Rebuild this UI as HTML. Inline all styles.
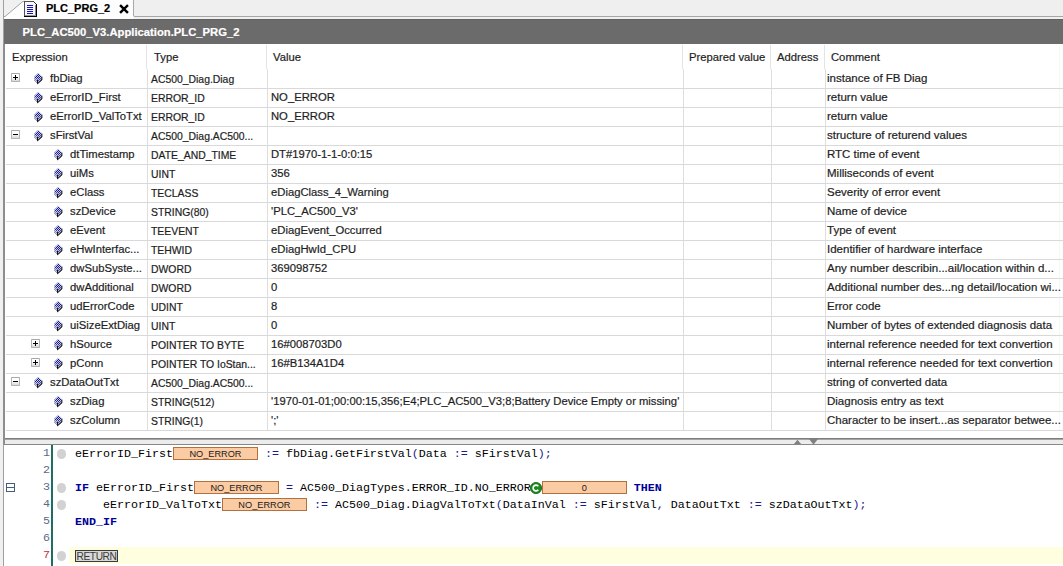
<!DOCTYPE html>
<html><head><meta charset="utf-8"><style>
*{margin:0;padding:0;box-sizing:border-box}
html,body{width:1063px;height:566px;overflow:hidden;background:#f0f0f0;position:relative}
body{font-family:"Liberation Sans",sans-serif;font-size:11.25px;color:#1e1e1e}
.abs{position:absolute}
.t{position:absolute;white-space:pre;line-height:19px;-webkit-text-stroke:0.2px currentColor}
.exp{position:absolute;width:9px;height:8.5px;border:1px solid #b4b4b4;border-top-color:#a8a8a8;border-radius:1px;background:linear-gradient(#ffffff 40%,#d8d8d8)}
.exp .eh{position:absolute;left:1.2px;top:2.6px;width:4.8px;height:1.4px;background:#000}
.exp .ev{position:absolute;left:2.9px;top:0.8px;width:1.4px;height:5px;background:#000}
.dia{position:absolute}
.code{position:absolute;font-family:"Liberation Mono",monospace;font-size:11.67px;white-space:pre;line-height:17px;color:#000}
.kw{color:#00009a;font-weight:bold}
.op{color:#1a1a8c}
.box{display:inline-block;vertical-align:top;position:relative;top:1px;width:85px;height:13px;background:#fbcba3;border:1px solid #b07040;font-family:"Liberation Sans",sans-serif;font-size:9.2px;line-height:12px;text-align:center;color:#1a1a1a}
.ln{position:absolute;font-family:"Liberation Mono",monospace;font-size:11.67px;line-height:17px;color:#5a6a88;text-align:right;width:20px}
.bp{position:absolute;width:9.5px;height:9.5px;border-radius:50%;background:#d2d2d2}
</style></head><body>

<svg width="0" height="0" style="position:absolute"><defs><pattern id="chk" width="2" height="2" patternUnits="userSpaceOnUse"><rect width="2" height="2" fill="#1a1a80"/><rect width="1" height="1" fill="#c4c8fa"/><rect x="1" y="1" width="1" height="1" fill="#c4c8fa"/></pattern><pattern id="chk2" width="2" height="2" patternUnits="userSpaceOnUse"><rect width="2" height="2" fill="#8080b0"/><rect width="1" height="1" fill="#c8cae4"/><rect x="1" y="1" width="1" height="1" fill="#c8cae4"/></pattern><pattern id="chk3" width="2" height="2" patternUnits="userSpaceOnUse"><rect width="2" height="2" fill="#50508a"/><rect width="1" height="1" fill="#b0b4d8"/><rect x="1" y="1" width="1" height="1" fill="#b0b4d8"/></pattern></defs></svg>
<div class="abs" style="left:0;top:0;width:1063px;height:19px;background:#f0f0f0"></div>
<div class="abs" style="left:133px;top:-2px;width:931px;height:19px;background:#efefef;border-left:1px solid #a6a6a6;border-bottom:1px solid #a6a6a6;border-bottom-left-radius:2px"></div>
<svg class="abs" style="left:0;top:0" width="140" height="19" viewBox="0 0 140 19"><path d="M4 16.5 L22.5 1 L22.5 0 L133.5 0 L133.5 19 L4 19 Z" fill="#fdfdfd"/><path d="M3.5 16.5 L5 16.5 L23 1.3 L25 1.3" fill="none" stroke="#a0a0a0" stroke-width="1"/><path d="M133.5 0 L133.5 16" fill="none" stroke="#a8a8a8" stroke-width="1"/></svg>
<svg class="abs" style="left:24px;top:0px" width="14" height="18" viewBox="0 0 14 18" shape-rendering="crispEdges"><path d="M0 1 L10 1 L13 4 L13 17 L0 17 Z" fill="#f6f6fc"/><rect x="0" y="1" width="1" height="16" fill="#505050"/><rect x="0" y="1" width="10" height="1" fill="#505050"/><path d="M9.5 1.5 L12.5 4.5" stroke="#303030" stroke-width="1" shape-rendering="auto"/><rect x="12" y="4" width="1" height="13" fill="#000"/><rect x="11" y="5" width="1" height="11" fill="#888"/><rect x="0" y="16" width="13" height="1" fill="#000"/><rect x="1" y="15" width="11" height="1" fill="#999"/><rect x="3" y="5" width="6" height="1" fill="#1414b4"/><rect x="3" y="7" width="6" height="1" fill="#1414b4"/><rect x="3" y="9" width="6" height="1" fill="#1414b4"/><rect x="3" y="11" width="6" height="1" fill="#1414b4"/><rect x="3" y="13" width="6" height="1" fill="#1414b4"/></svg>
<div class="t" style="left:46px;top:0px;font-weight:bold;font-size:11px;line-height:17px;color:#000">PLC_PRG_2</div>
<svg class="abs" style="left:119px;top:4px" width="10" height="10" viewBox="0 0 10 10"><path d="M1.9 1.9 L8.1 8.1 M8.1 1.9 L1.9 8.1" stroke="#000" stroke-width="2.4" stroke-linecap="square"/></svg>
<div class="abs" style="left:3px;top:0;width:1px;height:566px;background:#a0a0a0"></div>
<div class="abs" style="left:4px;top:19px;width:1059px;height:25px;background:#6b6b6b;border-top:1px solid #616161"></div>
<div class="t" style="left:22.5px;top:23px;font-weight:bold;color:#fff;font-size:11.25px">PLC_AC500_V3.Application.PLC_PRG_2</div>
<div class="abs" style="left:4px;top:44px;width:1059px;height:394px;background:#fff"></div>
<div class="abs" style="left:3px;top:44px;width:2px;height:401px;background:#8e8e8e"></div>
<div class="abs" style="left:146px;top:45px;width:1px;height:24px;background:#e4e4e4"></div>
<div class="abs" style="left:147px;top:69px;width:1px;height:362px;background:#dedede"></div>
<div class="abs" style="left:266px;top:45px;width:1px;height:24px;background:#e4e4e4"></div>
<div class="abs" style="left:267px;top:69px;width:1px;height:362px;background:#dedede"></div>
<div class="abs" style="left:682px;top:45px;width:1px;height:24px;background:#e4e4e4"></div>
<div class="abs" style="left:683px;top:69px;width:1px;height:362px;background:#dedede"></div>
<div class="abs" style="left:770px;top:45px;width:1px;height:24px;background:#e4e4e4"></div>
<div class="abs" style="left:771px;top:69px;width:1px;height:362px;background:#dedede"></div>
<div class="abs" style="left:824px;top:45px;width:1px;height:24px;background:#e4e4e4"></div>
<div class="abs" style="left:825px;top:69px;width:1px;height:362px;background:#dedede"></div>
<div class="abs" style="left:1059px;top:46px;width:1px;height:385px;background:#f7f7f7"></div>
<div class="t" style="left:12px;top:48px">Expression</div>
<div class="t" style="left:154px;top:48px">Type</div>
<div class="t" style="left:273px;top:48px">Value</div>
<div class="t" style="left:689px;top:48px">Prepared value</div>
<div class="t" style="left:777px;top:48px">Address</div>
<div class="t" style="left:831px;top:48px">Comment</div>
<div class="abs" style="left:6px;top:88px;width:1057px;height:1px;background:#d9d9d9"></div>
<div style="position:absolute;left:11px;top:73px"><span class="exp"><span class="eh"></span><span class="ev"></span></span></div>
<div style="position:absolute;left:33px;top:72px"><svg class="dia" width="11" height="13" viewBox="0 0 11 13"><path d="M5.3 1 L8.9 4.4 L4.5 7.8 L1.1 4.9 Z" fill="url(#chk)"/><path d="M1.1 4.9 L4.5 7.8 L4.5 11.8 L1.1 8.5 Z" fill="url(#chk2)"/><path d="M4.5 7.8 L8.9 4.4 L8.9 8 L4.5 11.8 Z" fill="url(#chk3)"/><path d="M4.5 8 L4.5 11.8 L8.9 8 L8.9 4.6" fill="none" stroke="#000" stroke-width="0.9"/></svg></div>
<div class="t" style="left:50px;top:69px">fbDiag</div>
<div class="t" style="left:151px;top:70px;font-size:10.4px">AC500_Diag.Diag</div>
<div class="t" style="left:827px;top:69px;font-size:11.5px">instance of FB Diag</div>
<div class="abs" style="left:6px;top:107px;width:1057px;height:1px;background:#d9d9d9"></div>
<div style="position:absolute;left:33px;top:91px"><svg class="dia" width="11" height="13" viewBox="0 0 11 13"><path d="M5.3 1 L8.9 4.4 L4.5 7.8 L1.1 4.9 Z" fill="url(#chk)"/><path d="M1.1 4.9 L4.5 7.8 L4.5 11.8 L1.1 8.5 Z" fill="url(#chk2)"/><path d="M4.5 7.8 L8.9 4.4 L8.9 8 L4.5 11.8 Z" fill="url(#chk3)"/><path d="M4.5 8 L4.5 11.8 L8.9 8 L8.9 4.6" fill="none" stroke="#000" stroke-width="0.9"/></svg></div>
<div class="t" style="left:50px;top:88px">eErrorID_First</div>
<div class="t" style="left:151px;top:89px;font-size:10.4px">ERROR_ID</div>
<div class="t" style="left:271px;top:88px">NO_ERROR</div>
<div class="t" style="left:827px;top:88px;font-size:11.5px">return value</div>
<div class="abs" style="left:6px;top:126px;width:1057px;height:1px;background:#d9d9d9"></div>
<div style="position:absolute;left:33px;top:110px"><svg class="dia" width="11" height="13" viewBox="0 0 11 13"><path d="M5.3 1 L8.9 4.4 L4.5 7.8 L1.1 4.9 Z" fill="url(#chk)"/><path d="M1.1 4.9 L4.5 7.8 L4.5 11.8 L1.1 8.5 Z" fill="url(#chk2)"/><path d="M4.5 7.8 L8.9 4.4 L8.9 8 L4.5 11.8 Z" fill="url(#chk3)"/><path d="M4.5 8 L4.5 11.8 L8.9 8 L8.9 4.6" fill="none" stroke="#000" stroke-width="0.9"/></svg></div>
<div class="t" style="left:50px;top:107px">eErrorID_ValToTxt</div>
<div class="t" style="left:151px;top:108px;font-size:10.4px">ERROR_ID</div>
<div class="t" style="left:271px;top:107px">NO_ERROR</div>
<div class="t" style="left:827px;top:107px;font-size:11.5px">return value</div>
<div class="abs" style="left:6px;top:145px;width:1057px;height:1px;background:#d9d9d9"></div>
<div style="position:absolute;left:11px;top:130px"><span class="exp"><span class="eh"></span></span></div>
<div style="position:absolute;left:33px;top:129px"><svg class="dia" width="11" height="13" viewBox="0 0 11 13"><path d="M5.3 1 L8.9 4.4 L4.5 7.8 L1.1 4.9 Z" fill="url(#chk)"/><path d="M1.1 4.9 L4.5 7.8 L4.5 11.8 L1.1 8.5 Z" fill="url(#chk2)"/><path d="M4.5 7.8 L8.9 4.4 L8.9 8 L4.5 11.8 Z" fill="url(#chk3)"/><path d="M4.5 8 L4.5 11.8 L8.9 8 L8.9 4.6" fill="none" stroke="#000" stroke-width="0.9"/></svg></div>
<div class="t" style="left:50px;top:126px">sFirstVal</div>
<div class="t" style="left:151px;top:127px;font-size:10.4px">AC500_Diag.AC500...</div>
<div class="t" style="left:827px;top:126px;font-size:11.5px">structure of returend values</div>
<div class="abs" style="left:6px;top:164px;width:1057px;height:1px;background:#d9d9d9"></div>
<div style="position:absolute;left:53px;top:148px"><svg class="dia" width="11" height="13" viewBox="0 0 11 13"><path d="M5.3 1 L8.9 4.4 L4.5 7.8 L1.1 4.9 Z" fill="url(#chk)"/><path d="M1.1 4.9 L4.5 7.8 L4.5 11.8 L1.1 8.5 Z" fill="url(#chk2)"/><path d="M4.5 7.8 L8.9 4.4 L8.9 8 L4.5 11.8 Z" fill="url(#chk3)"/><path d="M4.5 8 L4.5 11.8 L8.9 8 L8.9 4.6" fill="none" stroke="#000" stroke-width="0.9"/></svg></div>
<div class="t" style="left:70px;top:145px">dtTimestamp</div>
<div class="t" style="left:151px;top:146px;font-size:10.4px">DATE_AND_TIME</div>
<div class="t" style="left:271px;top:145px">DT#1970-1-1-0:0:15</div>
<div class="t" style="left:827px;top:145px;font-size:11.5px">RTC time of event</div>
<div class="abs" style="left:6px;top:183px;width:1057px;height:1px;background:#d9d9d9"></div>
<div style="position:absolute;left:53px;top:167px"><svg class="dia" width="11" height="13" viewBox="0 0 11 13"><path d="M5.3 1 L8.9 4.4 L4.5 7.8 L1.1 4.9 Z" fill="url(#chk)"/><path d="M1.1 4.9 L4.5 7.8 L4.5 11.8 L1.1 8.5 Z" fill="url(#chk2)"/><path d="M4.5 7.8 L8.9 4.4 L8.9 8 L4.5 11.8 Z" fill="url(#chk3)"/><path d="M4.5 8 L4.5 11.8 L8.9 8 L8.9 4.6" fill="none" stroke="#000" stroke-width="0.9"/></svg></div>
<div class="t" style="left:70px;top:164px">uiMs</div>
<div class="t" style="left:151px;top:165px;font-size:10.4px">UINT</div>
<div class="t" style="left:271px;top:164px">356</div>
<div class="t" style="left:827px;top:164px;font-size:11.5px">Milliseconds of event</div>
<div class="abs" style="left:6px;top:202px;width:1057px;height:1px;background:#d9d9d9"></div>
<div style="position:absolute;left:53px;top:186px"><svg class="dia" width="11" height="13" viewBox="0 0 11 13"><path d="M5.3 1 L8.9 4.4 L4.5 7.8 L1.1 4.9 Z" fill="url(#chk)"/><path d="M1.1 4.9 L4.5 7.8 L4.5 11.8 L1.1 8.5 Z" fill="url(#chk2)"/><path d="M4.5 7.8 L8.9 4.4 L8.9 8 L4.5 11.8 Z" fill="url(#chk3)"/><path d="M4.5 8 L4.5 11.8 L8.9 8 L8.9 4.6" fill="none" stroke="#000" stroke-width="0.9"/></svg></div>
<div class="t" style="left:70px;top:183px">eClass</div>
<div class="t" style="left:151px;top:184px;font-size:10.4px">TECLASS</div>
<div class="t" style="left:271px;top:183px">eDiagClass_4_Warning</div>
<div class="t" style="left:827px;top:183px;font-size:11.5px">Severity of error event</div>
<div class="abs" style="left:6px;top:221px;width:1057px;height:1px;background:#d9d9d9"></div>
<div style="position:absolute;left:53px;top:205px"><svg class="dia" width="11" height="13" viewBox="0 0 11 13"><path d="M5.3 1 L8.9 4.4 L4.5 7.8 L1.1 4.9 Z" fill="url(#chk)"/><path d="M1.1 4.9 L4.5 7.8 L4.5 11.8 L1.1 8.5 Z" fill="url(#chk2)"/><path d="M4.5 7.8 L8.9 4.4 L8.9 8 L4.5 11.8 Z" fill="url(#chk3)"/><path d="M4.5 8 L4.5 11.8 L8.9 8 L8.9 4.6" fill="none" stroke="#000" stroke-width="0.9"/></svg></div>
<div class="t" style="left:70px;top:202px">szDevice</div>
<div class="t" style="left:151px;top:203px;font-size:10.4px">STRING(80)</div>
<div class="t" style="left:271px;top:202px">&#x27;PLC_AC500_V3&#x27;</div>
<div class="t" style="left:827px;top:202px;font-size:11.5px">Name of device</div>
<div class="abs" style="left:6px;top:240px;width:1057px;height:1px;background:#d9d9d9"></div>
<div style="position:absolute;left:53px;top:224px"><svg class="dia" width="11" height="13" viewBox="0 0 11 13"><path d="M5.3 1 L8.9 4.4 L4.5 7.8 L1.1 4.9 Z" fill="url(#chk)"/><path d="M1.1 4.9 L4.5 7.8 L4.5 11.8 L1.1 8.5 Z" fill="url(#chk2)"/><path d="M4.5 7.8 L8.9 4.4 L8.9 8 L4.5 11.8 Z" fill="url(#chk3)"/><path d="M4.5 8 L4.5 11.8 L8.9 8 L8.9 4.6" fill="none" stroke="#000" stroke-width="0.9"/></svg></div>
<div class="t" style="left:70px;top:221px">eEvent</div>
<div class="t" style="left:151px;top:222px;font-size:10.4px">TEEVENT</div>
<div class="t" style="left:271px;top:221px">eDiagEvent_Occurred</div>
<div class="t" style="left:827px;top:221px;font-size:11.5px">Type of event</div>
<div class="abs" style="left:6px;top:259px;width:1057px;height:1px;background:#d9d9d9"></div>
<div style="position:absolute;left:53px;top:243px"><svg class="dia" width="11" height="13" viewBox="0 0 11 13"><path d="M5.3 1 L8.9 4.4 L4.5 7.8 L1.1 4.9 Z" fill="url(#chk)"/><path d="M1.1 4.9 L4.5 7.8 L4.5 11.8 L1.1 8.5 Z" fill="url(#chk2)"/><path d="M4.5 7.8 L8.9 4.4 L8.9 8 L4.5 11.8 Z" fill="url(#chk3)"/><path d="M4.5 8 L4.5 11.8 L8.9 8 L8.9 4.6" fill="none" stroke="#000" stroke-width="0.9"/></svg></div>
<div class="t" style="left:70px;top:240px">eHwInterfac...</div>
<div class="t" style="left:151px;top:241px;font-size:10.4px">TEHWID</div>
<div class="t" style="left:271px;top:240px">eDiagHwId_CPU</div>
<div class="t" style="left:827px;top:240px;font-size:11.5px">Identifier of hardware interface</div>
<div class="abs" style="left:6px;top:278px;width:1057px;height:1px;background:#d9d9d9"></div>
<div style="position:absolute;left:53px;top:262px"><svg class="dia" width="11" height="13" viewBox="0 0 11 13"><path d="M5.3 1 L8.9 4.4 L4.5 7.8 L1.1 4.9 Z" fill="url(#chk)"/><path d="M1.1 4.9 L4.5 7.8 L4.5 11.8 L1.1 8.5 Z" fill="url(#chk2)"/><path d="M4.5 7.8 L8.9 4.4 L8.9 8 L4.5 11.8 Z" fill="url(#chk3)"/><path d="M4.5 8 L4.5 11.8 L8.9 8 L8.9 4.6" fill="none" stroke="#000" stroke-width="0.9"/></svg></div>
<div class="t" style="left:70px;top:259px">dwSubSyste...</div>
<div class="t" style="left:151px;top:260px;font-size:10.4px">DWORD</div>
<div class="t" style="left:271px;top:259px">369098752</div>
<div class="t" style="left:827px;top:259px;font-size:11.5px">Any number describin...ail/location within d...</div>
<div class="abs" style="left:6px;top:297px;width:1057px;height:1px;background:#d9d9d9"></div>
<div style="position:absolute;left:53px;top:281px"><svg class="dia" width="11" height="13" viewBox="0 0 11 13"><path d="M5.3 1 L8.9 4.4 L4.5 7.8 L1.1 4.9 Z" fill="url(#chk)"/><path d="M1.1 4.9 L4.5 7.8 L4.5 11.8 L1.1 8.5 Z" fill="url(#chk2)"/><path d="M4.5 7.8 L8.9 4.4 L8.9 8 L4.5 11.8 Z" fill="url(#chk3)"/><path d="M4.5 8 L4.5 11.8 L8.9 8 L8.9 4.6" fill="none" stroke="#000" stroke-width="0.9"/></svg></div>
<div class="t" style="left:70px;top:278px">dwAdditional</div>
<div class="t" style="left:151px;top:279px;font-size:10.4px">DWORD</div>
<div class="t" style="left:271px;top:278px">0</div>
<div class="t" style="left:827px;top:278px;font-size:11.5px">Additional number des...ng detail/location wi...</div>
<div class="abs" style="left:6px;top:316px;width:1057px;height:1px;background:#d9d9d9"></div>
<div style="position:absolute;left:53px;top:300px"><svg class="dia" width="11" height="13" viewBox="0 0 11 13"><path d="M5.3 1 L8.9 4.4 L4.5 7.8 L1.1 4.9 Z" fill="url(#chk)"/><path d="M1.1 4.9 L4.5 7.8 L4.5 11.8 L1.1 8.5 Z" fill="url(#chk2)"/><path d="M4.5 7.8 L8.9 4.4 L8.9 8 L4.5 11.8 Z" fill="url(#chk3)"/><path d="M4.5 8 L4.5 11.8 L8.9 8 L8.9 4.6" fill="none" stroke="#000" stroke-width="0.9"/></svg></div>
<div class="t" style="left:70px;top:297px">udErrorCode</div>
<div class="t" style="left:151px;top:298px;font-size:10.4px">UDINT</div>
<div class="t" style="left:271px;top:297px">8</div>
<div class="t" style="left:827px;top:297px;font-size:11.5px">Error code</div>
<div class="abs" style="left:6px;top:335px;width:1057px;height:1px;background:#d9d9d9"></div>
<div style="position:absolute;left:53px;top:319px"><svg class="dia" width="11" height="13" viewBox="0 0 11 13"><path d="M5.3 1 L8.9 4.4 L4.5 7.8 L1.1 4.9 Z" fill="url(#chk)"/><path d="M1.1 4.9 L4.5 7.8 L4.5 11.8 L1.1 8.5 Z" fill="url(#chk2)"/><path d="M4.5 7.8 L8.9 4.4 L8.9 8 L4.5 11.8 Z" fill="url(#chk3)"/><path d="M4.5 8 L4.5 11.8 L8.9 8 L8.9 4.6" fill="none" stroke="#000" stroke-width="0.9"/></svg></div>
<div class="t" style="left:70px;top:316px">uiSizeExtDiag</div>
<div class="t" style="left:151px;top:317px;font-size:10.4px">UINT</div>
<div class="t" style="left:271px;top:316px">0</div>
<div class="t" style="left:827px;top:316px;font-size:11.5px">Number of bytes of extended diagnosis data</div>
<div class="abs" style="left:6px;top:354px;width:1057px;height:1px;background:#d9d9d9"></div>
<div style="position:absolute;left:31px;top:339px"><span class="exp"><span class="eh"></span><span class="ev"></span></span></div>
<div style="position:absolute;left:53px;top:338px"><svg class="dia" width="11" height="13" viewBox="0 0 11 13"><path d="M5.3 1 L8.9 4.4 L4.5 7.8 L1.1 4.9 Z" fill="url(#chk)"/><path d="M1.1 4.9 L4.5 7.8 L4.5 11.8 L1.1 8.5 Z" fill="url(#chk2)"/><path d="M4.5 7.8 L8.9 4.4 L8.9 8 L4.5 11.8 Z" fill="url(#chk3)"/><path d="M4.5 8 L4.5 11.8 L8.9 8 L8.9 4.6" fill="none" stroke="#000" stroke-width="0.9"/></svg></div>
<div class="t" style="left:70px;top:335px">hSource</div>
<div class="t" style="left:151px;top:336px;font-size:10.4px">POINTER TO BYTE</div>
<div class="t" style="left:271px;top:335px">16#008703D0</div>
<div class="t" style="left:827px;top:335px;font-size:11.5px">internal reference needed for text convertion</div>
<div class="abs" style="left:6px;top:373px;width:1057px;height:1px;background:#d9d9d9"></div>
<div style="position:absolute;left:31px;top:358px"><span class="exp"><span class="eh"></span><span class="ev"></span></span></div>
<div style="position:absolute;left:53px;top:357px"><svg class="dia" width="11" height="13" viewBox="0 0 11 13"><path d="M5.3 1 L8.9 4.4 L4.5 7.8 L1.1 4.9 Z" fill="url(#chk)"/><path d="M1.1 4.9 L4.5 7.8 L4.5 11.8 L1.1 8.5 Z" fill="url(#chk2)"/><path d="M4.5 7.8 L8.9 4.4 L8.9 8 L4.5 11.8 Z" fill="url(#chk3)"/><path d="M4.5 8 L4.5 11.8 L8.9 8 L8.9 4.6" fill="none" stroke="#000" stroke-width="0.9"/></svg></div>
<div class="t" style="left:70px;top:354px">pConn</div>
<div class="t" style="left:151px;top:355px;font-size:10.4px">POINTER TO IoStan...</div>
<div class="t" style="left:271px;top:354px">16#B134A1D4</div>
<div class="t" style="left:827px;top:354px;font-size:11.5px">internal reference needed for text convertion</div>
<div class="abs" style="left:6px;top:392px;width:1057px;height:1px;background:#d9d9d9"></div>
<div style="position:absolute;left:11px;top:377px"><span class="exp"><span class="eh"></span></span></div>
<div style="position:absolute;left:33px;top:376px"><svg class="dia" width="11" height="13" viewBox="0 0 11 13"><path d="M5.3 1 L8.9 4.4 L4.5 7.8 L1.1 4.9 Z" fill="url(#chk)"/><path d="M1.1 4.9 L4.5 7.8 L4.5 11.8 L1.1 8.5 Z" fill="url(#chk2)"/><path d="M4.5 7.8 L8.9 4.4 L8.9 8 L4.5 11.8 Z" fill="url(#chk3)"/><path d="M4.5 8 L4.5 11.8 L8.9 8 L8.9 4.6" fill="none" stroke="#000" stroke-width="0.9"/></svg></div>
<div class="t" style="left:50px;top:373px">szDataOutTxt</div>
<div class="t" style="left:151px;top:374px;font-size:10.4px">AC500_Diag.AC500...</div>
<div class="t" style="left:827px;top:373px;font-size:11.5px">string of converted data</div>
<div class="abs" style="left:6px;top:411px;width:1057px;height:1px;background:#d9d9d9"></div>
<div style="position:absolute;left:53px;top:395px"><svg class="dia" width="11" height="13" viewBox="0 0 11 13"><path d="M5.3 1 L8.9 4.4 L4.5 7.8 L1.1 4.9 Z" fill="url(#chk)"/><path d="M1.1 4.9 L4.5 7.8 L4.5 11.8 L1.1 8.5 Z" fill="url(#chk2)"/><path d="M4.5 7.8 L8.9 4.4 L8.9 8 L4.5 11.8 Z" fill="url(#chk3)"/><path d="M4.5 8 L4.5 11.8 L8.9 8 L8.9 4.6" fill="none" stroke="#000" stroke-width="0.9"/></svg></div>
<div class="t" style="left:70px;top:392px">szDiag</div>
<div class="t" style="left:151px;top:393px;font-size:10.4px">STRING(512)</div>
<div class="t" style="left:271px;top:392px">&#x27;1970-01-01;00:00:15,356;E4;PLC_AC500_V3;8;Battery Device Empty or missing&#x27;</div>
<div class="t" style="left:827px;top:392px;font-size:11.5px">Diagnosis entry as text</div>
<div class="abs" style="left:6px;top:430px;width:1057px;height:1px;background:#d9d9d9"></div>
<div style="position:absolute;left:53px;top:414px"><svg class="dia" width="11" height="13" viewBox="0 0 11 13"><path d="M5.3 1 L8.9 4.4 L4.5 7.8 L1.1 4.9 Z" fill="url(#chk)"/><path d="M1.1 4.9 L4.5 7.8 L4.5 11.8 L1.1 8.5 Z" fill="url(#chk2)"/><path d="M4.5 7.8 L8.9 4.4 L8.9 8 L4.5 11.8 Z" fill="url(#chk3)"/><path d="M4.5 8 L4.5 11.8 L8.9 8 L8.9 4.6" fill="none" stroke="#000" stroke-width="0.9"/></svg></div>
<div class="t" style="left:70px;top:411px">szColumn</div>
<div class="t" style="left:151px;top:412px;font-size:10.4px">STRING(1)</div>
<div class="t" style="left:271px;top:411px">&#x27;;&#x27;</div>
<div class="t" style="left:827px;top:411px;font-size:11.5px">Character to be insert...as separator betwee...</div>
<div class="abs" style="left:5px;top:438px;width:1058px;height:7px;background:#ececec;border-top:1px solid #7e7e7e;border-bottom:1px solid #888"></div>
<div class="abs" style="left:5px;top:439px;width:1058px;height:1px;background:#a4a4a4"></div>
<svg class="abs" style="left:790px;top:438px" width="32" height="8" viewBox="0 0 32 8"><path d="M3.5 6.5 L7.5 1.8 L11.5 6.5 Z" fill="#808080"/><path d="M19 1 L28 1 L23.5 6.8 Z" fill="#808080"/></svg>
<div class="abs" style="left:4px;top:445px;width:1059px;height:121px;background:#fff"></div>
<div class="abs" style="left:69px;top:547px;width:994px;height:17px;background:#fffedf"></div>
<div class="abs" style="left:51px;top:445px;width:2px;height:121px;background:#1d6e64"></div>
<div class="abs" style="left:6px;top:483px;width:9px;height:9px;border:1px solid #455f78"><div class="abs" style="left:0;top:3px;width:7px;height:1px;background:#455f78"></div></div>
<div class="ln" style="left:30px;top:445px;color:#5a6a88">1</div>
<div class="bp" style="left:56.8px;top:449px"></div>
<div class="ln" style="left:30px;top:462px;color:#5a6a88">2</div>
<div class="ln" style="left:30px;top:479px;color:#5a6a88">3</div>
<div class="bp" style="left:56.8px;top:483px"></div>
<div class="ln" style="left:30px;top:496px;color:#5a6a88">4</div>
<div class="bp" style="left:56.8px;top:500px"></div>
<div class="ln" style="left:30px;top:513px;color:#5a6a88">5</div>
<div class="ln" style="left:30px;top:530px;color:#5a6a88">6</div>
<div class="ln" style="left:30px;top:547px;color:#c03030">7</div>
<div class="bp" style="left:56.8px;top:551px"></div>
<div class="code" style="left:75px;top:446px">eErrorID_First<span class="box" style="width:85px">NO_ERROR</span> <span class="op">:=</span> fbDiag.GetFirstVal<span class="op">(</span>Data <span class="op">:=</span> sFirstVal<span class="op">);</span></div>
<div class="code" style="left:75px;top:480px"><span class="kw">IF</span> eErrorID_First<span class="box" style="width:85px">NO_ERROR</span> <span class="op">=</span> AC500_DiagTypes.ERROR_ID.NO_ERROR<span class="cc"><svg width="12" height="12" viewBox="0 0 12 12"><circle cx="6" cy="6" r="5.6" fill="#1c8a1c" stroke="#0e5e0e" stroke-width="0.8"/><path d="M8.3 4.2 A2.9 2.9 0 1 0 8.3 7.8" fill="none" stroke="#fff" stroke-width="1.7"/></svg></span><span class="box" style="width:85px">0</span> <span class="kw">THEN</span></div>
<div class="code" style="left:75px;top:497px">    eErrorID_ValToTxt<span class="box" style="width:85px">NO_ERROR</span> <span class="op">:=</span> AC500_Diag.DiagValToTxt<span class="op">(</span>DataInVal <span class="op">:=</span> sFirstVal<span class="op">,</span> DataOutTxt <span class="op">:=</span> szDataOutTxt<span class="op">);</span></div>
<div class="code" style="left:75px;top:514px"><span class="kw">END_IF</span></div>
<div class="code" style="left:75px;top:548px"><span class="ret">RETURN</span></div>
<style>
.cc{display:inline-block;vertical-align:top;position:relative;top:1.5px;width:11px;height:12px;margin-left:-0.5px;margin-right:0.5px}.cc svg{display:block}
.ret{display:inline-block;vertical-align:top;position:relative;top:2px;height:12px;width:43px;background:#d8d8d8;border:1px solid #3a3a3a;font-family:"Liberation Sans",sans-serif;font-size:10.2px;line-height:10px;color:#3a3a3a;text-align:center;letter-spacing:-0.4px;padding-top:1px}
</style>
</body></html>
